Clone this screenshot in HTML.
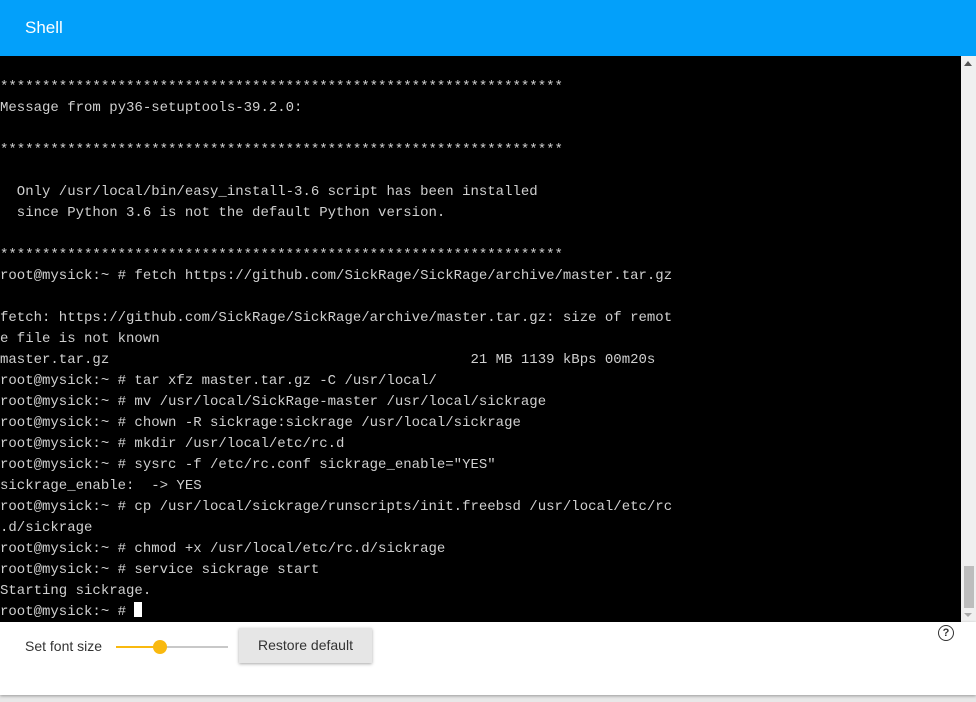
<!DOCTYPE html>
<html><head><style>
body{margin:0;width:976px;height:702px;overflow:hidden;background:#e8e8e8;font-family:"Liberation Sans",sans-serif}
.hdr{position:absolute;left:0;top:0;width:976px;height:56px;background:#03a0fa;color:#fff;font-size:17px}
.hdr span{position:absolute;left:25px;top:18px}
.term{position:absolute;left:0;top:56px;width:961px;height:566px;background:#000;overflow:hidden}
pre{margin:0;font-family:"Liberation Mono",monospace;font-size:14px;line-height:21px;color:#d0d0d0;white-space:pre}
.cur{display:inline-block;width:8px;height:15px;background:#fff;vertical-align:-2px}
.sb{position:absolute;left:961px;top:56px;width:15px;height:566px;background:#f0f0f0}
.thumb{position:absolute;left:3px;top:510px;width:10px;height:42px;background:#bdbdbd}
.up{position:absolute;left:3px;top:5px;border:4px solid transparent;border-bottom:5px solid #555;border-top:0;width:0}
.dn{position:absolute;left:3px;top:557px;border:4px solid transparent;border-top:4px solid #aaa;border-bottom:0;width:0}
.panel{position:absolute;left:0;top:622px;width:976px;height:73px;background:#fff;box-shadow:0 1px 3px rgba(0,0,0,.35)}
.lbl{position:absolute;left:25px;top:16px;font-size:14px;color:#333}
.track{position:absolute;left:116px;top:24px;width:112px;height:2px;background:#c8c8c8}
.fill{position:absolute;left:116px;top:24px;width:45px;height:2px;background:#f9b90f}
.knob{position:absolute;left:153px;top:18px;width:14px;height:14px;border-radius:50%;background:#f9b90f}
.btn{position:absolute;left:239px;top:6px;width:133px;height:35px;background:#e6e6e6;box-shadow:0 1px 3px rgba(0,0,0,.35);font-size:14px;color:#333;text-align:center;line-height:35px}
.help{position:absolute;left:938px;top:3px;width:14px;height:14px;border:1.5px solid #333;border-radius:50%;font-size:11px;text-align:center;line-height:14px;font-weight:bold;color:#333}
</style></head><body>
<div class="hdr"><span>Shell</span></div>
<div class="term"><pre>&#32;
*******************************************************************
Message from py36-setuptools-39.2.0:

*******************************************************************

  Only /usr/local/bin/easy_install-3.6 script has been installed
  since Python 3.6 is not the default Python version.

*******************************************************************
root@mysick:~ # fetch https://github.com/SickRage/SickRage/archive/master.tar.gz

fetch: https://github.com/SickRage/SickRage/archive/master.tar.gz: size of remot
e file is not known
master.tar.gz                                           21 MB 1139 kBps 00m20s
root@mysick:~ # tar xfz master.tar.gz -C /usr/local/
root@mysick:~ # mv /usr/local/SickRage-master /usr/local/sickrage
root@mysick:~ # chown -R sickrage:sickrage /usr/local/sickrage
root@mysick:~ # mkdir /usr/local/etc/rc.d
root@mysick:~ # sysrc -f /etc/rc.conf sickrage_enable="YES"
sickrage_enable:  -> YES
root@mysick:~ # cp /usr/local/sickrage/runscripts/init.freebsd /usr/local/etc/rc
.d/sickrage
root@mysick:~ # chmod +x /usr/local/etc/rc.d/sickrage
root@mysick:~ # service sickrage start
Starting sickrage.
root@mysick:~ # <span class="cur"></span></pre></div>
<div class="sb"><div class="up"></div><div class="thumb"></div><div class="dn"></div></div>
<div class="panel">
<div class="lbl">Set font size</div>
<div class="track"></div><div class="fill"></div><div class="knob"></div>
<div class="btn">Restore default</div>
<div class="help">?</div>
</div>
</body></html>
